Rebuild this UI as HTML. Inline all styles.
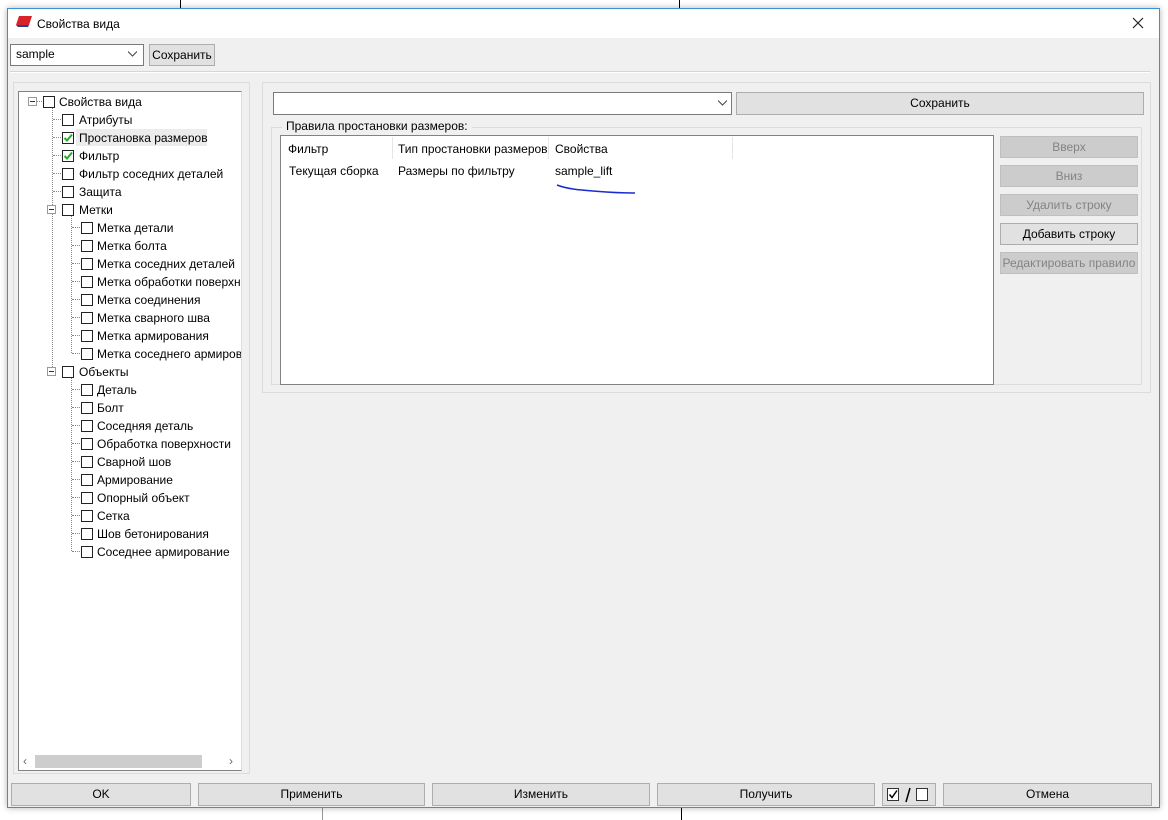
<!DOCTYPE html>
<html><head><meta charset="utf-8"><style>
*{box-sizing:border-box;margin:0;padding:0}
body{width:1168px;height:820px;background:#fff;position:relative;overflow:hidden;font-family:"Liberation Sans",sans-serif;font-size:12px;color:#000}
.a{position:absolute}
.btn{position:absolute;background:#e1e1e1;border:1px solid #adadad;text-align:center;line-height:20px;font-size:12px}
.dis{background:#ccc;border-color:#bfbfbf;color:#838383}
.cb{position:absolute;width:12px;height:12px;border:1.5px solid #222;background:#fff}
.t{position:absolute;white-space:nowrap;line-height:14px}
.dv{position:absolute;border-left:1px dotted #888;width:0}
.dh{position:absolute;border-top:1px dotted #888;height:0}
.pm{position:absolute;width:9px;height:9px;border:1px solid #999;background:#fff}
.pm::after{content:"";position:absolute;left:1px;top:3px;width:5px;border-top:1px solid #333}
.ck{position:absolute}
</style></head><body>
<div class="a" style="left:180px;top:0;width:500px;height:8px;border-left:1px solid #000;border-right:1px solid #000"></div>
<div class="a" style="left:322px;top:808px;width:360px;height:12px;border-left:1px solid #999;border-right:1px solid #000"></div>
<div class="a" style="left:7px;top:8px;width:1153px;height:800px;background:#f0f0f0;border:1px solid #3c8fd0;box-shadow:0 0 6px rgba(0,0,0,.3)"></div>
<div class="a" style="left:8px;top:9px;width:1151px;height:29px;background:#fff"></div>
<svg class="a" style="left:15px;top:14px" width="18" height="16"><path d="M4 2 L17 2 L14 11 L1 11Z" fill="#d8232a"/><path d="M1 11 L14 11 L13 13 L3 13Z" fill="#2a3f8f"/></svg>
<div class="t" style="left:37px;top:17px;font-size:12px">Свойства вида</div>
<svg class="a" style="left:1132px;top:17px" width="12" height="12"><path d="M1 1L11 11M11 1L1 11" stroke="#222" stroke-width="1.2"/></svg>

<div class="a" style="left:10px;top:44px;width:134px;height:22px;background:#fff;border:1px solid #7a7a7a"></div>
<div class="t" style="left:16px;top:47px">sample</div>
<svg class="a" style="left:128px;top:51px" width="9" height="6"><path d="M0 0.5L4.5 5L9 0.5" stroke="#444" fill="none"/></svg>
<div class="btn" style="left:149px;top:44px;width:66px;height:22px">Сохранить</div>
<div class="a" style="left:10px;top:71px;width:1140px;height:2px;border-top:1px solid #d5d5d5;border-bottom:1px solid #fff"></div>

<div class="a" style="left:13px;top:82px;width:237px;height:692px;border:1px solid #dcdcdc"></div>
<div class="a" style="left:18px;top:91px;width:224px;height:680px;background:#fff;border:1px solid #828282;border-right-color:#ddd"></div>
<div class="a" style="left:19px;top:752px;width:222px;height:18px;background:#fff"></div>
<div class="a" style="left:35px;top:755px;width:167px;height:13px;background:#cdcdcd"></div>
<div class="t" style="left:23px;top:754px;color:#666">‹</div>
<div class="t" style="left:229px;top:754px;color:#666">›</div>

<div class="dv" style="left:52px;top:107px;height:264px"></div>
<div class="dv" style="left:71px;top:215px;height:138px"></div>
<div class="dv" style="left:71px;top:377px;height:174px"></div>
<div class="pm" style="left:28px;top:97px"></div>
<div class="dh" style="left:37px;top:101px;width:5px"></div>
<div class="cb" style="left:43px;top:96px"></div><div class="t" style="left:59px;top:95px">Свойства вида</div>

<div class="dh" style="left:53px;top:119px;width:8px"></div><div class="cb" style="left:62px;top:114px"></div><div class="t" style="left:79px;top:113px">Атрибуты</div>
<div class="a" style="left:76px;top:129px;width:131px;height:17px;background:#ececec"></div>
<div class="dh" style="left:53px;top:137px;width:8px"></div><div class="cb" style="left:62px;top:132px"></div><div class="t" style="left:79px;top:131px">Простановка размеров</div>
<svg class="ck" style="left:62px;top:132px" width="12" height="12"><path d="M2.5 6L5 8.5L10 2.5" stroke="#22b022" stroke-width="2" fill="none"/></svg>
<div class="dh" style="left:53px;top:155px;width:8px"></div><div class="cb" style="left:62px;top:150px"></div><div class="t" style="left:79px;top:149px">Фильтр</div>
<svg class="ck" style="left:62px;top:150px" width="12" height="12"><path d="M2.5 6L5 8.5L10 2.5" stroke="#22b022" stroke-width="2" fill="none"/></svg>
<div class="dh" style="left:53px;top:173px;width:8px"></div><div class="cb" style="left:62px;top:168px"></div><div class="t" style="left:79px;top:167px">Фильтр соседних деталей</div>
<div class="dh" style="left:53px;top:191px;width:8px"></div><div class="cb" style="left:62px;top:186px"></div><div class="t" style="left:79px;top:185px">Защита</div>
<div class="pm" style="left:47px;top:205px"></div><div class="cb" style="left:62px;top:204px"></div><div class="t" style="left:79px;top:203px">Метки</div>

<div class="dh" style="left:72px;top:227px;width:8px"></div><div class="cb" style="left:81px;top:222px"></div><div class="t" style="left:97px;top:221px">Метка детали</div>
<div class="dh" style="left:72px;top:245px;width:8px"></div><div class="cb" style="left:81px;top:240px"></div><div class="t" style="left:97px;top:239px">Метка болта</div>
<div class="dh" style="left:72px;top:263px;width:8px"></div><div class="cb" style="left:81px;top:258px"></div><div class="t" style="left:97px;top:257px">Метка соседних деталей</div>
<div class="dh" style="left:72px;top:281px;width:8px"></div><div class="cb" style="left:81px;top:276px"></div><div class="t" style="left:97px;top:275px">Метка обработки поверхн</div>
<div class="dh" style="left:72px;top:299px;width:8px"></div><div class="cb" style="left:81px;top:294px"></div><div class="t" style="left:97px;top:293px">Метка соединения</div>
<div class="dh" style="left:72px;top:317px;width:8px"></div><div class="cb" style="left:81px;top:312px"></div><div class="t" style="left:97px;top:311px">Метка сварного шва</div>
<div class="dh" style="left:72px;top:335px;width:8px"></div><div class="cb" style="left:81px;top:330px"></div><div class="t" style="left:97px;top:329px">Метка армирования</div>
<div class="dh" style="left:72px;top:353px;width:8px"></div><div class="cb" style="left:81px;top:348px"></div><div class="t" style="left:97px;top:347px;width:144px;overflow:hidden">Метка соседнего армирования</div>
<div class="pm" style="left:47px;top:367px"></div><div class="cb" style="left:62px;top:366px"></div><div class="t" style="left:79px;top:365px">Объекты</div>

<div class="dh" style="left:72px;top:389px;width:8px"></div><div class="cb" style="left:81px;top:384px"></div><div class="t" style="left:97px;top:383px">Деталь</div>
<div class="dh" style="left:72px;top:407px;width:8px"></div><div class="cb" style="left:81px;top:402px"></div><div class="t" style="left:97px;top:401px">Болт</div>
<div class="dh" style="left:72px;top:425px;width:8px"></div><div class="cb" style="left:81px;top:420px"></div><div class="t" style="left:97px;top:419px">Соседняя деталь</div>
<div class="dh" style="left:72px;top:443px;width:8px"></div><div class="cb" style="left:81px;top:438px"></div><div class="t" style="left:97px;top:437px">Обработка поверхности</div>
<div class="dh" style="left:72px;top:461px;width:8px"></div><div class="cb" style="left:81px;top:456px"></div><div class="t" style="left:97px;top:455px">Сварной шов</div>
<div class="dh" style="left:72px;top:479px;width:8px"></div><div class="cb" style="left:81px;top:474px"></div><div class="t" style="left:97px;top:473px">Армирование</div>
<div class="dh" style="left:72px;top:497px;width:8px"></div><div class="cb" style="left:81px;top:492px"></div><div class="t" style="left:97px;top:491px">Опорный объект</div>
<div class="dh" style="left:72px;top:515px;width:8px"></div><div class="cb" style="left:81px;top:510px"></div><div class="t" style="left:97px;top:509px">Сетка</div>
<div class="dh" style="left:72px;top:533px;width:8px"></div><div class="cb" style="left:81px;top:528px"></div><div class="t" style="left:97px;top:527px">Шов бетонирования</div>
<div class="dh" style="left:72px;top:551px;width:8px"></div><div class="cb" style="left:81px;top:546px"></div><div class="t" style="left:97px;top:545px">Соседнее армирование</div>

<div class="a" style="left:262px;top:82px;width:889px;height:311px;border:1px solid #dcdcdc"></div>
<div class="a" style="left:273px;top:92px;width:459px;height:23px;background:#fff;border:1px solid #7a7a7a"></div>
<svg class="a" style="left:718px;top:100px" width="9" height="6"><path d="M0 0.5L4.5 5L9 0.5" stroke="#444" fill="none"/></svg>
<div class="btn" style="left:736px;top:92px;width:408px;height:23px">Сохранить</div>
<div class="a" style="left:271px;top:127px;width:871px;height:258px;border:1px solid #dcdcdc"></div>
<div class="t" style="left:282px;top:119px;background:#f0f0f0;padding:0 4px">Правила простановки размеров:</div>
<div class="a" style="left:280px;top:135px;width:714px;height:250px;background:#fff;border:1px solid #828282"></div>
<div class="a" style="left:392px;top:137px;height:22px;border-left:1px solid #e5e5e5"></div>
<div class="a" style="left:548px;top:137px;height:22px;border-left:1px solid #e5e5e5"></div>
<div class="a" style="left:732px;top:137px;height:22px;border-left:1px solid #e5e5e5"></div>
<div class="t" style="left:288px;top:142px">Фильтр</div>
<div class="t" style="left:398px;top:142px">Тип простановки размеров</div>
<div class="t" style="left:555px;top:142px">Свойства</div>
<div class="t" style="left:289px;top:164px">Текущая сборка</div>
<div class="t" style="left:398px;top:164px">Размеры по фильтру</div>
<div class="t" style="left:555px;top:164px">sample_lift</div>
<svg class="a" style="left:555px;top:183px" width="85" height="14"><path d="M2 2 C12 6 25 7 38 8 C50 9 60 10 80 10" stroke="#1a2bd0" stroke-width="1.6" fill="none"/></svg>

<div class="btn dis" style="left:1000px;top:136px;width:138px;height:22px">Вверх</div>
<div class="btn dis" style="left:1000px;top:165px;width:138px;height:22px">Вниз</div>
<div class="btn dis" style="left:1000px;top:194px;width:138px;height:22px">Удалить строку</div>
<div class="btn" style="left:1000px;top:223px;width:138px;height:22px">Добавить строку</div>
<div class="btn dis" style="left:1000px;top:252px;width:138px;height:22px">Редактировать правило</div>

<div class="btn" style="left:11px;top:783px;width:180px;height:23px">OK</div>
<div class="btn" style="left:198px;top:783px;width:227px;height:23px">Применить</div>
<div class="btn" style="left:432px;top:783px;width:218px;height:23px">Изменить</div>
<div class="btn" style="left:657px;top:783px;width:218px;height:23px">Получить</div>
<div class="btn" style="left:882px;top:783px;width:54px;height:23px"></div>
<div class="a" style="left:887px;top:788px;width:12px;height:13px;border:1px solid #333;background:#fff"></div>
<svg class="a" style="left:887px;top:788px" width="12" height="13"><path d="M2.5 6.5L5 9.5L10 2.5" stroke="#000" stroke-width="1.5" fill="none"/></svg>
<svg class="a" style="left:904px;top:787px" width="8" height="16"><path d="M6 1L2 15" stroke="#000" stroke-width="1.5"/></svg>
<div class="a" style="left:916px;top:788px;width:12px;height:13px;border:1px solid #333;background:#fff"></div>
<div class="btn" style="left:943px;top:783px;width:209px;height:23px">Отмена</div>
</body></html>
